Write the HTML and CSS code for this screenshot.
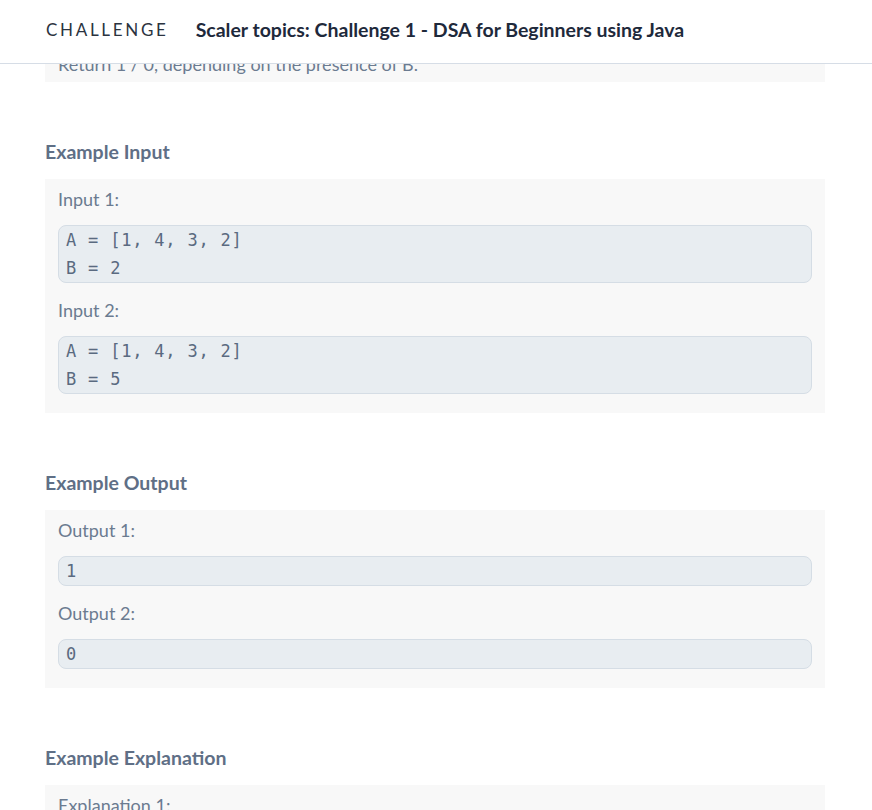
FILE: index.html
```html
<!DOCTYPE html>
<html lang="en">
<head>
<meta charset="utf-8">
<title>Scaler topics: Challenge 1 - DSA for Beginners using Java</title>
<link rel="stylesheet" href="styles.css">
</head>
<body>
<header class="topbar">
  <span class="brand">CHALLENGE</span>
  <span class="title">Scaler topics: Challenge 1 - DSA for Beginners using Java</span>
</header>
<main class="content">
  <section class="box desc">
    <p class="text">Return 1 / 0, depending on the presence of B.</p>
  </section>

  <h2 class="heading">Example Input</h2>
  <section class="box">
    <p class="label">Input 1:</p>
    <pre class="code">A = [1, 4, 3, 2]
B = 2</pre>
    <p class="label">Input 2:</p>
    <pre class="code">A = [1, 4, 3, 2]
B = 5</pre>
  </section>

  <h2 class="heading">Example Output</h2>
  <section class="box">
    <p class="label">Output 1:</p>
    <pre class="code">1</pre>
    <p class="label">Output 2:</p>
    <pre class="code">0</pre>
  </section>

  <h2 class="heading">Example Explanation</h2>
  <section class="box">
    <p class="label">Explanation 1:</p>
  </section>
</main>
</body>
</html>
```

FILE: styles.css
```css
html, body {
  margin: 0;
  padding: 0;
  background: #ffffff;
}

body {
  font-family: "Lato", "Liberation Sans", sans-serif;
  overflow: hidden;
  height: 810px;
}

.topbar {
  position: fixed;
  top: 0;
  left: 0;
  right: 0;
  height: 64px;
  box-sizing: border-box;
  padding: 0 0 5px 46px;
  background: #ffffff;
  border-bottom: 1px solid #d6dde6;
  display: flex;
  align-items: center;
  gap: 27px;
  z-index: 10;
}

.brand {
  font-size: 17px;
  letter-spacing: 2.7px;
  color: #2b3340;
  font-weight: 400;
}

.title {
  font-size: 19.5px;
  font-weight: 700;
  color: #1e293b;
}

.content {
  width: 780px;
  padding: 40px 0 0 45px;
}

.box {
  background: #f8f8f8;
  padding: 8px 13px 19px;
}

.box.desc {
  padding: 12px 13px 6px;
}

.text,
.label {
  margin: 0;
  font-size: 18px;
  line-height: 24px;
  color: #6b7b90;
}

.label {
  margin-bottom: 14px;
}

.code {
  margin: 0 0 15px;
  padding: 0 7px;
  background: #e8edf1;
  border: 1px solid #d5dde5;
  border-radius: 8px;
  font-family: "DejaVu Sans Mono", "Liberation Mono", monospace;
  font-size: 17px;
  letter-spacing: 0.8px;
  line-height: 28px;
  color: #5a6a80;
}

.box .code:last-child {
  margin-bottom: 0;
}

.heading {
  margin: 56px 0 13px;
  font-size: 19.5px;
  line-height: 28px;
  font-weight: 700;
  color: #5f6f86;
}
```
